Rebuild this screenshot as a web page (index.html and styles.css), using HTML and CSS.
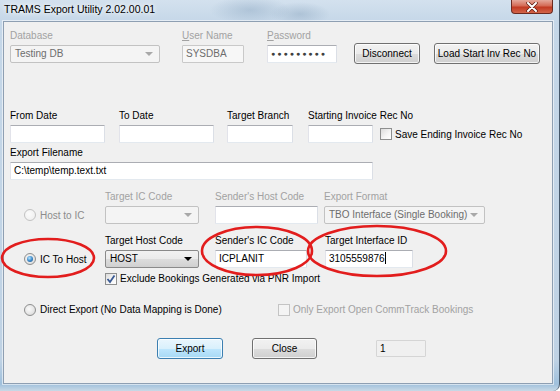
FILE: index.html
```html
<!DOCTYPE html>
<html>
  <head>
    <meta charset="UTF-8" />
    <title>TRAMS Export Utility</title>
    <link rel="stylesheet" href="styles.css">
  </head>
  <body>
    <div class="window">
      <div class="titlebar">
        <span class="title">TRAMS Export Utility 2.02.00.01</span>
        <span class="close">
          <svg width="12" height="10" viewBox="0 0 12 10">
            <path d="M2 1 L10 9 M10 1 L2 9" stroke="#5a1a10" stroke-width="3.4" stroke-linecap="round"/>
            <path d="M2 1 L10 9 M10 1 L2 9" stroke="#fff" stroke-width="2" stroke-linecap="round"/>
          </svg>
        </span>
      </div>

      <div class="client">
        <!-- login row -->
        <div class="row row-login">
          <div class="field w150">
            <label class="off">Database</label>
            <div class="combo off">Testing DB<i class="arrow"></i></div>
          </div>
          <div class="field w62 gap22">
            <label class="off"><u>U</u>ser Name</label>
            <div class="box off">SYSDBA</div>
          </div>
          <div class="field w70 gap23">
            <label class="off"><u>P</u>assword</label>
            <div class="box"><span class="dots">●●●●●●●●●</span></div>
          </div>
          <button class="btn w66 gap17">Disconnect</button>
          <button class="btn w106 gap14">Load Start Inv Rec No</button>
        </div>

        <!-- dates row -->
        <div class="row row-dates">
          <div class="field w95">
            <label>From Date</label>
            <div class="box"></div>
          </div>
          <div class="field w95 gap14">
            <label>To Date</label>
            <div class="box"></div>
          </div>
          <div class="field w66 gap13">
            <label>Target Branch</label>
            <div class="box"></div>
          </div>
          <div class="field w65 gap15">
            <label>Starting Invoice Rec No</label>
            <div class="box"></div>
          </div>
          <div class="checkline gap7">
            <span class="check"></span>
            <span>Save Ending Invoice Rec No</span>
          </div>
        </div>

        <div class="row row-file">
          <div class="field w363">
            <label>Export Filename</label>
            <div class="box">C:\temp\temp.text.txt</div>
          </div>
        </div>

        <!-- host to ic -->
        <div class="row row-mode first-mode">
          <div class="mode">
            <span class="radio off"></span>
            <span class="mode-label off-dark">Host to IC</span>
          </div>
          <div class="field w94">
            <label class="off">Target IC Code</label>
            <div class="combo off"><i class="arrow"></i></div>
          </div>
          <div class="field w103 gap16">
            <label class="off">Sender's Host Code</label>
            <div class="box"></div>
          </div>
          <div class="field w161 gap6">
            <label class="off">Export Format</label>
            <div class="combo off">TBO Interface (Single Booking)<i class="arrow"></i></div>
          </div>
        </div>

        <!-- ic to host -->
        <div class="row row-mode second-mode">
          <div class="mode">
            <span class="radio on"></span>
            <span class="mode-label">IC To Host</span>
          </div>
          <div class="field w94">
            <label>Target Host Code</label>
            <div class="combo">HOST<i class="arrow"></i></div>
          </div>
          <div class="field w92 gap16">
            <label>Sender's IC Code</label>
            <div class="box">ICPLANIT</div>
          </div>
          <div class="field w88 gap18">
            <label>Target Interface ID</label>
            <div class="box">3105559876<span class="caret"></span></div>
          </div>
        </div>

        <div class="row row-exclude">
          <div class="checkline">
            <span class="check">
              <svg width="10" height="10" viewBox="0 0 10 10">
                <path d="M1.5 5 L4 8 L8.5 1.5" fill="none" stroke="#3a5a94" stroke-width="1.8"/>
              </svg>
            </span>
            <span>Exclude Bookings Generated via PNR Import</span>
          </div>
        </div>

        <div class="row row-direct">
          <div class="mode direct">
            <span class="radio"></span>
            <span class="mode-label">Direct Export (No Data Mapping is Done)</span>
          </div>
          <div class="checkline off">
            <span class="check off"></span>
            <span>Only Export Open CommTrack Bookings</span>
          </div>
        </div>

        <div class="row row-actions">
          <button class="btn default w66">Export</button>
          <button class="btn w65 gap29">Close</button>
          <div class="box readonly w50 gap59">1</div>
        </div>
      </div>

      <!-- annotation marks drawn over the dialog -->
      <svg class="marks" width="560" height="391" viewBox="0 0 560 391">
        <ellipse cx="48" cy="258" rx="46" ry="19" />
        <ellipse cx="257" cy="251" rx="55" ry="24" />
        <ellipse cx="377" cy="251" rx="69" ry="25" />
      </svg>
    </div>
  </body>
</html>
```

FILE: styles.css
```css
body {
  margin: 0;
  font-family: "Liberation Sans", Arial, sans-serif;
  font-size: 10px;
  color: #000;
}
.window {
  position: relative;
  width: 560px;
  height: 391px;
  box-sizing: border-box;
  display: flex;
  flex-direction: column;
  overflow: hidden;
  border-right: 1px solid #46586b;
  border-bottom-right-radius: 7px;
  background:
    radial-gradient(ellipse 40px 14px at 250px 10px, rgba(120,150,180,.35), transparent),
    radial-gradient(ellipse 30px 12px at 300px 14px, rgba(110,140,170,.3), transparent),
    linear-gradient(to bottom, #d3e1ee 0, #c5d7e8 22px, #bfd2e4 360px, #9fc0dc 384px, #c9d9e6 391px);
}
.titlebar {
  height: 21px;
  flex: none;
  display: flex;
  align-items: flex-start;
  padding-left: 4px;
}
.title {
  font-size: 10.5px;
  line-height: 18px;
  text-shadow: 0 0 4px #fff, 0 0 7px #fff;
}
.close {
  margin-left: auto;
  margin-right: 6px;
  width: 42px;
  height: 14px;
  box-sizing: border-box;
  border: 1px solid #6b2a20;
  border-top: none;
  border-radius: 0 0 4px 4px;
  background: linear-gradient(to bottom, #e4a89a 0, #d46a55 45%, #c23a22 55%, #d2654a 100%);
  display: flex;
  align-items: center;
  justify-content: center;
}

/* client area */
.client {
  flex: 1;
  margin: 0 6px 7px 3px;
  border: 1px solid #8e9fb2;
  box-shadow: 0 0 0 1px rgba(255,255,255,.55);
  background: #f0f0f0;
  padding: 8px 0 0 6px;
}
.row {
  display: flex;
  align-items: flex-end;
}
.row-dates { margin-top: 47px; }
.row-file { margin-top: 4px; }
.first-mode { margin-top: 11px; }
.second-mode { margin-top: 11px; }
.row-exclude { margin-top: 4px; padding-left: 95px; }
.row-direct { margin-top: 18px; align-items: center; }
.row-actions { margin-top: 22px; padding-left: 147px; align-items: center; }

.field { display: flex; flex-direction: column; flex: none; }
.field label {
  display: block;
  height: 12px;
  line-height: 12px;
  margin-bottom: 3px;
  white-space: nowrap;
}
.field label u { text-decoration: underline; }
.off, .off label { color: #a2a2a2; }
.off-dark { color: #8c8c8c; }

.box {
  height: 18px;
  box-sizing: border-box;
  border: 1px solid;
  border-color: #abadb3 #dbdfe6 #e3e9ef #e2e3ea;
  border-radius: 1px;
  background: #fff;
  padding: 0 3px;
  line-height: 16px;
  white-space: nowrap;
  overflow: hidden;
}
.box.off {
  background: #f7f7f7;
  color: #6d6d6d;
  border-color: #c9c9c9;
}
.box.readonly {
  height: 17px;
  line-height: 15px;
  background: #f0f0f0;
  border-color: #d5d5d5;
  flex: none;
}
.dots {
  font-size: 7px;
  letter-spacing: 2px;
  color: #404040;
  vertical-align: 1px;
}
.caret {
  display: inline-block;
  width: 1px;
  height: 12px;
  background: #000;
  vertical-align: -2px;
}

.combo {
  position: relative;
  height: 18px;
  box-sizing: border-box;
  border: 1px solid #8a8a8a;
  border-radius: 2px;
  background: linear-gradient(to bottom, #f2f2f2 0, #ebebeb 50%, #dddddd 51%, #d0d0d0 100%);
  padding: 0 4px;
  line-height: 16px;
  white-space: nowrap;
}
.combo.off {
  border-color: #c2c2c2;
  background: #f4f4f4;
  color: #6d6d6d;
}
.arrow {
  position: absolute;
  right: 6px;
  top: 6px;
  width: 0;
  height: 0;
  border-left: 4px solid transparent;
  border-right: 4px solid transparent;
  border-top: 4px solid #000;
}
.combo.off .arrow { border-top-color: #a8a8a8; }

.btn {
  flex: none;
  height: 21px;
  margin-bottom: -1px;
  box-sizing: border-box;
  border: 1px solid #707070;
  border-radius: 3px;
  background: linear-gradient(to bottom, #f2f2f2 0, #ebebeb 50%, #dddddd 51%, #cfcfcf 100%);
  box-shadow: inset 0 0 0 1px rgba(255,255,255,.75);
  font-family: inherit;
  font-size: 10px;
  color: #000;
  padding: 0;
  white-space: nowrap;
}
.btn.default {
  border-color: #3c7fb1;
  background: linear-gradient(to bottom, #eaf6fd 0, #d9f0fc 50%, #bee6fd 51%, #a7d9f5 100%);
}
.row-actions .btn { margin-bottom: 0; }

.checkline {
  display: flex;
  align-items: center;
  gap: 3px;
  height: 18px;
  white-space: nowrap;
}
.row-exclude .checkline, .row-direct .checkline { height: 13px; }
.check {
  width: 12px;
  height: 12px;
  box-sizing: border-box;
  border: 1px solid #8e8f8f;
  background: linear-gradient(135deg, #dcdcdc 0, #f6f6f6 60%, #fff 100%);
  display: flex;
  align-items: center;
  justify-content: center;
}
.check.off {
  border-color: #c4c4c4;
  background: #f4f4f4;
}
.checkline.off { color: #a2a2a2; }

.mode {
  width: 95px;
  flex: none;
  box-sizing: border-box;
  padding-left: 14px;
  height: 18px;
  display: flex;
  align-items: center;
  gap: 4px;
  white-space: nowrap;
}
.mode.direct { width: 268px; height: 13px; }
.radio {
  width: 12px;
  height: 12px;
  box-sizing: border-box;
  border-radius: 50%;
  border: 1px solid #8e8f8f;
  background: radial-gradient(circle at 40% 40%, #fafafa 0, #e6e6e6 55%, #cfcfcf 100%);
  display: flex;
  align-items: center;
  justify-content: center;
  flex: none;
}
.radio.off {
  border-color: #c2c2c2;
  background: radial-gradient(circle at 40% 40%, #fbfbfb 0, #ececec 100%);
}
.radio.on::after {
  content: "";
  width: 6px;
  height: 6px;
  border-radius: 50%;
  background: radial-gradient(circle at 40% 35%, #b8e6ff 0, #3f8ccc 50%, #1b4f84 100%);
}

.w50 { width: 50px; }
.w62 { width: 62px; }
.w65 { width: 65px; }
.w66 { width: 66px; }
.w70 { width: 70px; }
.w88 { width: 88px; }
.w92 { width: 92px; }
.w94 { width: 94px; }
.w95 { width: 95px; }
.w103 { width: 103px; }
.w106 { width: 106px; }
.w150 { width: 150px; }
.w161 { width: 161px; }
.w363 { width: 363px; }
.gap6 { margin-left: 6px; }
.gap7 { margin-left: 7px; }
.gap13 { margin-left: 13px; }
.gap14 { margin-left: 14px; }
.gap15 { margin-left: 15px; }
.gap16 { margin-left: 16px; }
.gap17 { margin-left: 17px; }
.gap18 { margin-left: 18px; }
.gap22 { margin-left: 22px; }
.gap23 { margin-left: 23px; }
.gap29 { margin-left: 29px; }
.gap59 { margin-left: 59px; }

.marks {
  position: absolute;
  top: 0;
  left: 0;
  pointer-events: none;
}
.marks ellipse {
  fill: none;
  stroke: #e21d1d;
  stroke-width: 2.6;
}
```
